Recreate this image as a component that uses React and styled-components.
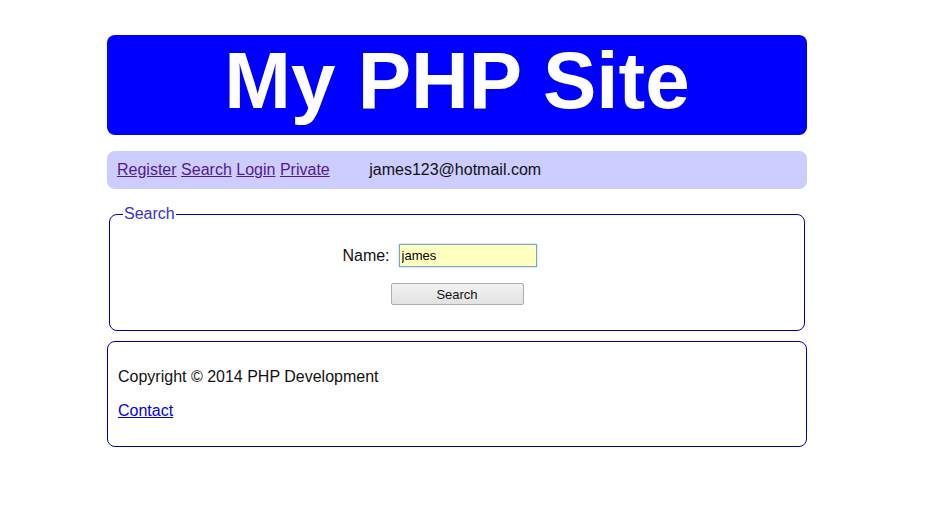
import styled, { createGlobalStyle } from "styled-components";

const GlobalStyle = createGlobalStyle`
    body {
        margin: 0;
        background: #fff;
        font-family: "Liberation Sans", Arial, sans-serif;
        font-size: 16px;
        color: #111;
    }
`

const App = () => {
    return (
        <Page>
            <GlobalStyle />
            <Header>My PHP Site</Header>
            <Nav>
                <NavLink href="#">Register</NavLink>
                <NavLink href="#">Search</NavLink>
                <NavLink href="#">Login</NavLink>
                <NavLink href="#">Private</NavLink>
                <User>james123@hotmail.com</User>
            </Nav>
            <Fieldset>
                <Legend>Search</Legend>
                <FormRow>
                    <Label htmlFor="name">Name:</Label>
                    <Input id="name" defaultValue="james" />
                </FormRow>
                <ButtonRow>
                    <Button type="button">Search</Button>
                </ButtonRow>
            </Fieldset>
            <Footer>
                <p>Copyright © 2014 PHP Development</p>
                <p><ContactLink href="#">Contact</ContactLink></p>
            </Footer>
        </Page>
    );
}

const Page = styled.div`
    width: 700px;
    padding: 35px 0 40px 107px;
`

const Header = styled.h1`
    margin: 0;
    height: 100px;
    box-sizing: border-box;
    padding-top: 6px;
    background: #0000ff;
    border-radius: 8px;
    color: #fff;
    text-align: center;
    font-size: 80px;
    line-height: 80px;
    font-weight: bold;
`

const Nav = styled.nav`
    margin-top: 16px;
    height: 38px;
    box-sizing: border-box;
    padding: 10px;
    background: #ccccff;
    border-radius: 8px;
    line-height: 18px;
    display: flex;
    gap: 4.5px;
`

const NavLink = styled.a`
    color: #551a8b;
    text-decoration: underline;
`

const User = styled.span`
    margin-left: 35px;
    color: #111;
`

const Fieldset = styled.fieldset`
    margin: 16px 2px 0;
    padding: 21px 12px 25px;
    border: 1px solid #0000aa;
    border-radius: 8px;
`

const Legend = styled.legend`
    padding: 0 1px;
    margin-left: 1px;
    color: #3333cc;
    line-height: 18px;
`

const FormRow = styled.div`
    display: flex;
    justify-content: center;
    align-items: center;
    gap: 9px;
    padding-right: 35px;
`

const Label = styled.label`
    color: #111;
`

const Input = styled.input`
    width: 138px;
    height: 23px;
    box-sizing: border-box;
    padding: 1px 2px;
    border: 1px solid #7da2ce;
    box-shadow: 0 0 2px #9cc0ea;
    background: #ffffc0;
    font-family: "Liberation Sans", Arial, sans-serif;
    font-size: 13px;
    color: #000;
    outline: none;
`

const ButtonRow = styled.div`
    display: flex;
    justify-content: center;
    margin-top: 16px;
`

const Button = styled.button`
    width: 133px;
    height: 22px;
    border: 1px solid #acacac;
    border-radius: 2px;
    background: linear-gradient(#f2f2f2, #e2e2e2);
    font-family: "Liberation Sans", Arial, sans-serif;
    font-size: 13px;
    color: #111;
    padding: 0;
`

const Footer = styled.footer`
    margin-top: 10px;
    padding: 10px;
    border: 1px solid #0000aa;
    border-radius: 8px;
    line-height: 18px;

    p {
        margin: 16px 0;
    }
`

const ContactLink = styled.a`
    color: #0000ee;
    text-decoration: underline;
`

export default App;
